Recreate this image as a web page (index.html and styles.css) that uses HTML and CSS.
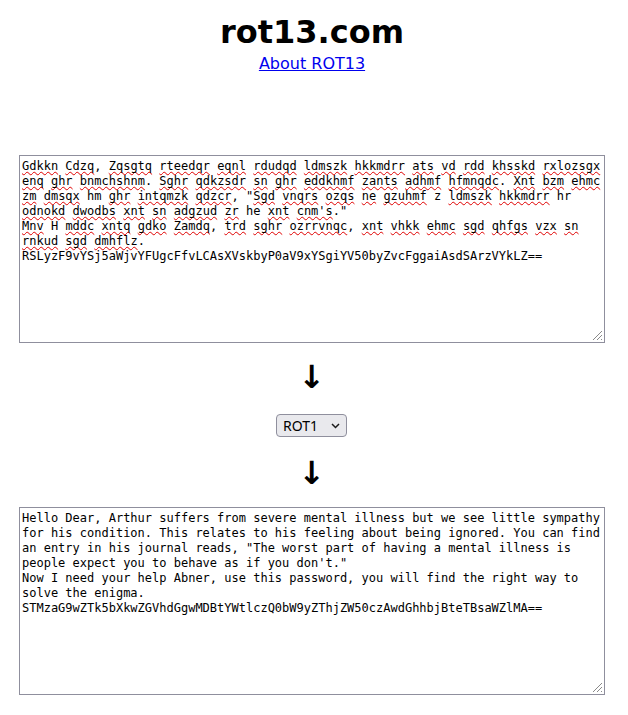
FILE: index.html
```html
<!DOCTYPE html>
<html lang="en">
<head>
<meta charset="utf-8">
<title>rot13.com</title>
<link rel="stylesheet" href="styles.css">
</head>
<body>
<main class="page">
  <h1 class="title">rot13.com</h1>
  <div class="about"><a href="#">About ROT13</a></div>

  <div class="box box-top"><span class="m">Gdkkn</span> <span class="m">Cdzq</span>, <span class="m">Zqsgtq</span> <span class="m">rteedqr</span> <span class="m">eqnl</span> <span class="m">rdudqd</span> <span class="m">ldmszk</span> <span class="m">hkkmdrr</span> <span class="m">ats</span> <span class="m">vd</span> <span class="m">rdd</span> <span class="m">khsskd</span> <span class="m">rxlozsgx</span> <span class="m">enq</span> <span class="m">ghr</span> <span class="m">bnmchshnm</span>. <span class="m">Sghr</span> <span class="m">qdkzsdr</span> <span class="m">sn</span> <span class="m">ghr</span> <span class="m">eddkhmf</span> <span class="m">zants</span> <span class="m">adhmf</span> <span class="m">hfmnqdc</span>. <span class="m">Xnt</span> <span class="m">bzm</span> <span class="m">ehmc</span> <span class="m">zm</span> <span class="m">dmsqx</span> hm <span class="m">ghr</span> <span class="m">intqmzk</span> <span class="m">qdzcr</span>, "<span class="m">Sgd</span> <span class="m">vnqrs</span> <span class="m">ozqs</span> <span class="m">ne</span> <span class="m">gzuhmf</span> z <span class="m">ldmszk</span> <span class="m">hkkmdrr</span> hr <span class="m">odnokd</span> <span class="m">dwodbs</span> <span class="m">xnt</span> <span class="m">sn</span> <span class="m">adgzud</span> <span class="m">zr</span> he <span class="m">xnt</span> <span class="m">cnm's</span>."
<span class="m">Mnv</span> H <span class="m">mddc</span> <span class="m">xntq</span> <span class="m">gdko</span> <span class="m">Zamdq</span>, <span class="m">trd</span> <span class="m">sghr</span> <span class="m">ozrrvnqc</span>, <span class="m">xnt</span> <span class="m">vhkk</span> <span class="m">ehmc</span> <span class="m">sgd</span> <span class="m">qhfgs</span> <span class="m">vzx</span> <span class="m">sn</span> <span class="m">rnkud</span> <span class="m">sgd</span> <span class="m">dmhflz</span>.
RSLyzF9vYSj5aWjvYFUgcFfvLCAsXVskbyP0aV9xYSgiYV50byZvcFggaiAsdSArzVYkLZ==</div>

  <div class="arrow arrow-1">↓</div>

  <div class="select-wrap">
    <select class="rot-select">
      <option>ROT1</option>
    </select>
    <svg class="chevron" width="9" height="6" viewBox="0 0 9 6" aria-hidden="true"><path d="M1 1 L4.5 4.5 L8 1" fill="none" stroke="#1a1a1a" stroke-width="1.5"/></svg>
  </div>

  <div class="arrow arrow-2">↓</div>

  <div class="box box-bottom">Hello Dear, Arthur suffers from severe mental illness but we see little sympathy for his condition. This relates to his feeling about being ignored. You can find an entry in his journal reads, "The worst part of having a mental illness is people expect you to behave as if you don't."
Now I need your help Abner, use this password, you will find the right way to solve the enigma.
STMzaG9wZTk5bXkwZGVhdGgwMDBtYWtlczQ0bW9yZThjZW50czAwdGhhbjBteTBsaWZlMA==</div>
</main>
</body>
</html>
```

FILE: styles.css
```css
html, body {
  margin: 0;
  padding: 0;
  background: #ffffff;
}

body {
  font-family: "DejaVu Sans", sans-serif;
  color: #000;
}

.page {
  width: 586px;
  margin: 0 0 0 19px;
  display: flex;
  flex-direction: column;
  align-items: center;
  padding-top: 14px;
}

.title {
  margin: 0;
  font-family: "DejaVu Sans", sans-serif;
  font-weight: bold;
  font-size: 32px;
  line-height: 37px;
}

.about {
  margin-top: 3px;
  font-size: 16px;
  line-height: 19px;
}

.about a {
  color: #0000ee;
  text-decoration: underline;
}

.box {
  position: relative;
  box-sizing: border-box;
  align-self: stretch;
  height: 188px;
  border: 1px solid #8f8f9d;
  padding: 3px 2px;
  font-family: "DejaVu Sans Mono", monospace;
  font-size: 12px;
  line-height: 15px;
  white-space: pre-wrap;
  overflow-wrap: break-word;
  overflow: hidden;
  background: #fff;
}

.box::after {
  content: "";
  position: absolute;
  right: 2px;
  bottom: 2px;
  width: 10px;
  height: 10px;
  background: repeating-linear-gradient(135deg, transparent 0 1.6px, #8a8a8a 1.6px 2.8px);
  clip-path: polygon(100% 0, 100% 100%, 0 100%);
}

.box-top {
  margin-top: 82px;
}

.m {
  text-decoration: underline wavy #e00000;
  text-decoration-thickness: 1px;
  text-underline-offset: 1px;
  text-decoration-skip-ink: none;
}

.arrow {
  font-family: "DejaVu Sans", sans-serif;
  font-weight: bold;
  font-size: 32px;
  line-height: 37px;
}

.arrow-1 {
  margin-top: 16px;
}

.arrow-2 {
  margin-top: 18px;
}

.select-wrap {
  position: relative;
  margin-top: 18px;
  width: 71px;
  height: 23px;
  margin-left: -1px;
}

.rot-select {
  appearance: none;
  -webkit-appearance: none;
  box-sizing: border-box;
  width: 71px;
  height: 23px;
  margin: 0;
  padding: 0 0 0 6px;
  border: 1px solid #8f8f9d;
  border-radius: 4px;
  background: #e9e9ed;
  color: #000;
  font-family: "Noto Sans", sans-serif;
  font-size: 14px;
  line-height: 21px;
}

.chevron {
  position: absolute;
  right: 7px;
  top: 9px;
}

.box-bottom {
  margin-top: 15px;
}
```
